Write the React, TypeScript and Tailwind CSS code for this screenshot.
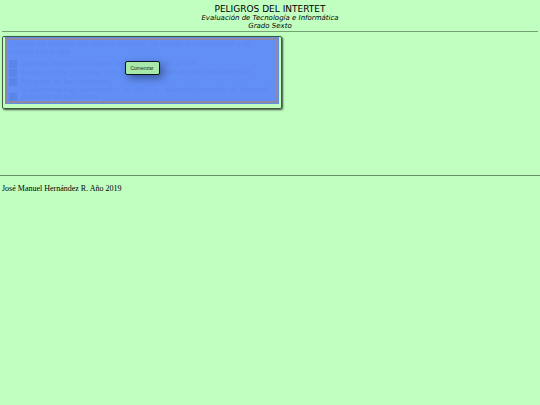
import React from "react";

// each option is laid out in a wide and a narrow column
const options = [
    ["Aunque después se borre, no", "en la red"],
    ["Puedes evitar perderla, a tr", "des de red para borrarla"],
    ["Ninguna de las anteriores", ""],
    ["Si al menos hay contraseña, se elimina después de publicada", "automáticamente de internet"],
];

const Question = () => {
    return (
        <fieldset className="px-px text-[7px] leading-[8px] text-[#5e88ed]">
            <legend className="float-left w-full pb-1">
                Cuando se publica una foto en internet, se pierde la información y el control sobre ella
            </legend>
            <div className="clear-both flex flex-col gap-px leading-[7px]">
                {options.map(([text, rest], i) => (
                    <label key={i} className="flex items-end gap-1">
                        <input type="radio" name="respuesta" className="size-2 shrink-0 appearance-none bg-[#5b84e7]" />
                        <span className="w-[140px]">{text}</span>
                        <span className="self-start whitespace-nowrap">{rest}</span>
                    </label>
                ))}
            </div>
        </fieldset>
    )
}

const App = () => {
    return (
        <div className="min-h-screen bg-[#c1ffc1] text-black">
            <header className="mx-[2px] border-b border-[#73a373] pt-[5px] pb-px text-center font-['DejaVu_Sans',sans-serif]">
                <h1 className="text-[9px] leading-[9px]">PELIGROS DEL INTERTET</h1>
                <p className="text-[7px] leading-[8px] italic">Evaluación de Tecnología e Informática</p>
                <p className="text-[7px] leading-[8px] italic">Grado Sexto</p>
            </header>

            <main className="border-b border-[#659065] px-[2px] pt-1 pb-[66px] font-['DejaVu_Sans',sans-serif]">
                <section className="w-full max-w-[280px] rounded-[2px] border border-[#405c40] px-[2px] pb-1 shadow-[1px_1px_2px_#000000b3]">
                    <div className="relative h-[67px] overflow-hidden border border-[#5f8fe0] bg-[#628ff6]">
                        <div className="h-full border-2 border-[#9088a6]">
                            <Question />
                        </div>
                        {/* start screen over the question */}
                        <div className="absolute inset-0 flex items-start justify-center pt-[23px]">
                            <button className="flex h-[14px] w-[35px] items-center justify-center rounded-[2px] border border-[#061522] bg-[#a8e8a8] font-['Liberation_Sans',sans-serif] text-[5px] leading-none text-[#1c2c1c] shadow-[3px_3px_8px_#00000066]">
                                Comenzar
                            </button>
                        </div>
                    </div>
                </section>
            </main>

            <footer className="px-[2px] pt-2 font-['Liberation_Serif',serif] text-[8px] leading-[9px]">
                José Manuel Hernández R. Año 2019
            </footer>
        </div>
    )
}
export default App;
